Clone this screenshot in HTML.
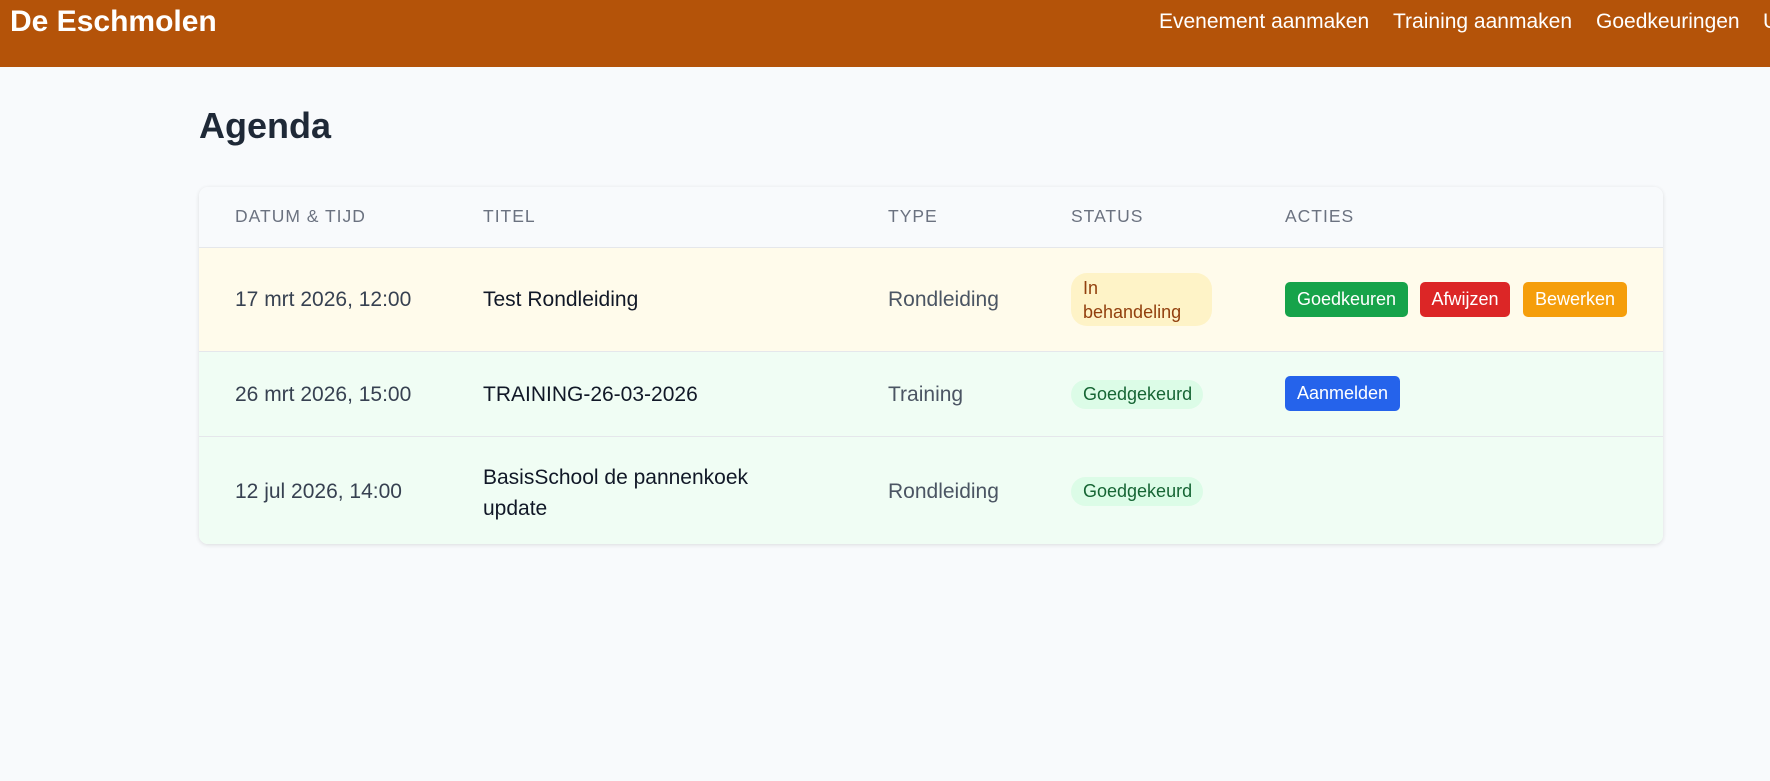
<!DOCTYPE html>
<html><head><meta charset="utf-8"><style>
*{margin:0;padding:0;box-sizing:border-box}
body{width:1770px;height:781px;background:#f8fafc;font-family:"Liberation Sans",Arial,sans-serif;position:relative;overflow:hidden;color:#1f2937}
.hdr{position:absolute;left:0;top:0;width:1770px;height:67px;background:#b45309}
.brand{position:absolute;left:10px;top:5px;font-size:30px;font-weight:bold;color:#fff}
.nav{position:absolute;top:10px;font-size:21px;color:#fff;white-space:nowrap}
h1{position:absolute;left:199px;top:105px;font-size:36px;font-weight:bold;color:#1f2937}
.card{position:absolute;left:199px;top:187px;width:1464px;height:357px;background:#fff;border-radius:9px;box-shadow:0 1px 4px rgba(0,0,0,.12);overflow:hidden}
.row{position:absolute;left:0;width:1464px;border-top:1px solid #e5e7eb}
.t{position:absolute;font-size:21px;white-space:nowrap}
.th{position:absolute;top:19px;font-size:17.5px;letter-spacing:1px;color:#6b7280}
.badge{position:absolute;border-radius:16px;font-size:18px}
.btn{position:absolute;height:35px;border-radius:5px;color:#fff;font-size:18px;line-height:35px;text-align:center}
</style></head><body>
<div class="hdr">
<div class="brand">De Eschmolen</div>
<div class="nav" style="left:1159px">Evenement aanmaken</div>
<div class="nav" style="left:1393px">Training aanmaken</div>
<div class="nav" style="left:1596px">Goedkeuringen</div>
<div class="nav" style="left:1763px">U</div>
</div>
<h1>Agenda</h1>
<div class="card">
<div class="row" style="top:0;height:60px;background:#f8fafc;border-top:none">
<div class="th" style="left:36px">DATUM &amp; TIJD</div>
<div class="th" style="left:284px">TITEL</div>
<div class="th" style="left:689px">TYPE</div>
<div class="th" style="left:872px">STATUS</div>
<div class="th" style="left:1086px">ACTIES</div>
</div>
<div class="row" style="top:60px;height:104px;background:#fffbeb">
<div class="t" style="left:36px;top:40px;color:#374151">17 mrt 2026, 12:00</div>
<div class="t" style="left:284px;top:40px;color:#111827">Test Rondleiding</div>
<div class="t" style="left:689px;top:40px;color:#4b5563">Rondleiding</div>
<div class="badge" style="left:872px;top:25px;width:141px;height:53px;background:#fef3c7;color:#92400e;padding:3px 12px;line-height:24px">In<br>behandeling</div>
<div class="btn" style="left:1086px;top:34px;width:123px;background:#16a34a">Goedkeuren</div>
<div class="btn" style="left:1221px;top:34px;width:90px;background:#dc2626">Afwijzen</div>
<div class="btn" style="left:1324px;top:34px;width:104px;background:#f59e0b">Bewerken</div>
</div>
<div class="row" style="top:164px;height:85px;background:#f0fdf4">
<div class="t" style="left:36px;top:31px;color:#374151">26 mrt 2026, 15:00</div>
<div class="t" style="left:284px;top:31px;color:#111827">TRAINING-26-03-2026</div>
<div class="t" style="left:689px;top:31px;color:#4b5563">Training</div>
<div class="badge" style="left:872px;top:28px;width:132px;height:29px;background:#dcfce7;color:#166534;padding:0 12px;line-height:29px">Goedgekeurd</div>
<div class="btn" style="left:1086px;top:24px;width:115px;background:#2563eb">Aanmelden</div>
</div>
<div class="row" style="top:249px;height:108px;background:#f0fdf4">
<div class="t" style="left:36px;top:43px;color:#374151">12 jul 2026, 14:00</div>
<div class="t" style="left:284px;top:25px;color:#111827;line-height:31px">BasisSchool de pannenkoek<br>update</div>
<div class="t" style="left:689px;top:43px;color:#4b5563">Rondleiding</div>
<div class="badge" style="left:872px;top:40px;width:132px;height:29px;background:#dcfce7;color:#166534;padding:0 12px;line-height:29px">Goedgekeurd</div>
</div>
</div>
</body></html>
